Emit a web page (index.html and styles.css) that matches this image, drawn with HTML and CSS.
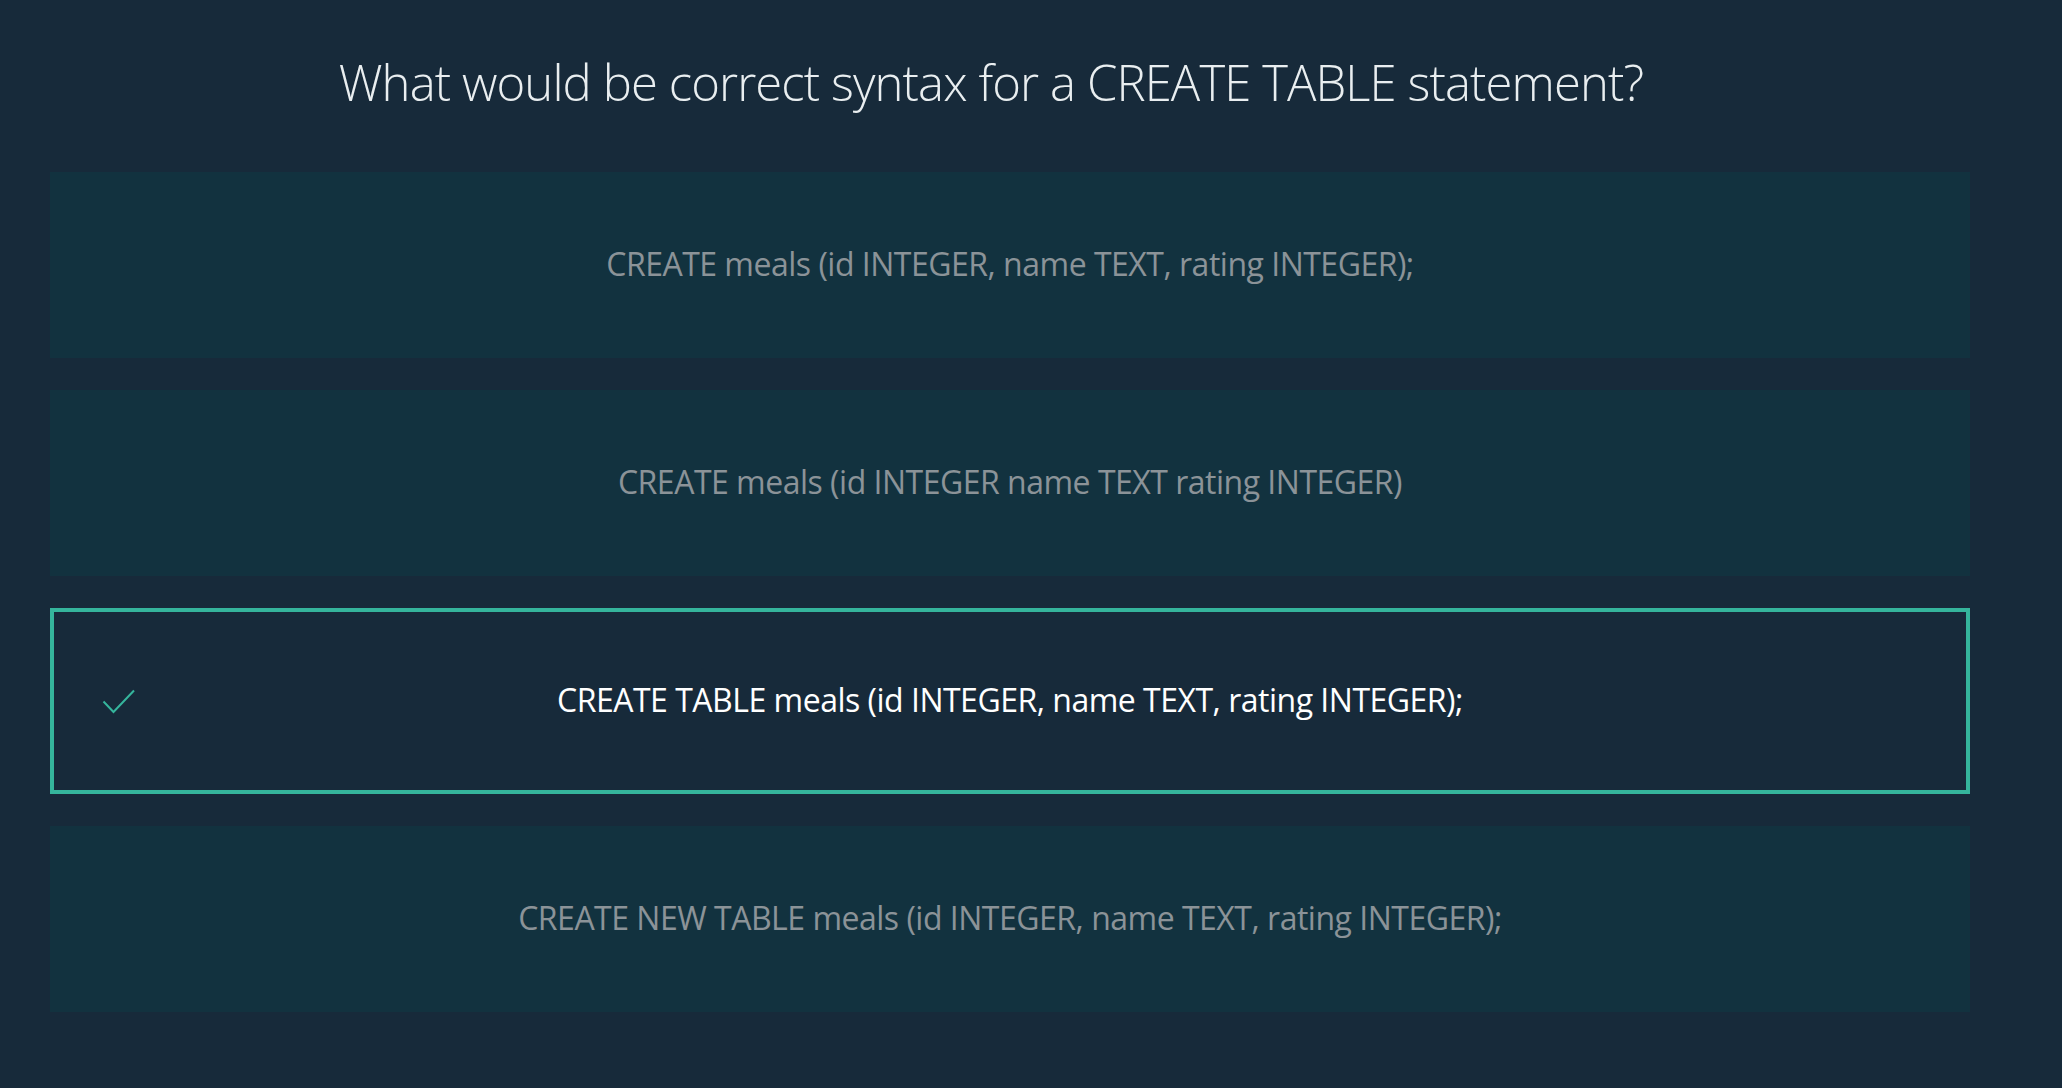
FILE: index.html
```html
<!DOCTYPE html>
<html>
<head>
<meta charset="utf-8">
<link rel="stylesheet" href="styles.css">
</head>
<body>
<div class="page">
  <h1 class="question">What would be correct syntax for a CREATE TABLE statement?</h1>
  <div class="options">
    <div class="option"><span class="label">CREATE meals (id INTEGER, name TEXT, rating INTEGER);</span></div>
    <div class="option"><span class="label">CREATE meals (id INTEGER name TEXT rating INTEGER)</span></div>
    <div class="option selected">
      <svg class="check" width="34" height="26" viewBox="0 0 34 26"><polyline points="1.5,12.5 11.5,23 32,1.5" fill="none" stroke="#35b59c" stroke-width="2"/></svg>
      <span class="label">CREATE TABLE meals (id INTEGER, name TEXT, rating INTEGER);</span>
    </div>
    <div class="option"><span class="label">CREATE NEW TABLE meals (id INTEGER, name TEXT, rating INTEGER);</span></div>
  </div>
</div>
</body>
</html>
```
FILE: styles.css
```css
html, body {
  margin: 0;
  padding: 0;
  background: #172a3a;
  height: 100%;
}
.page {
  padding: 0 92px 0 50px;
  font-family: "Open Sans", "Noto Sans", sans-serif;
}
.question {
  margin: 0;
  padding: 50px 38px 0 0;
  height: 172px;
  box-sizing: border-box;
  text-align: center;
  font-weight: 300;
  font-size: 49px;
  line-height: 64px;
  letter-spacing: -0.9px;
  color: #e9eef0;
}
.options {
  display: flex;
  flex-direction: column;
  gap: 32px;
}
.option {
  position: relative;
  height: 186px;
  box-sizing: border-box;
  background: #12323f;
  display: flex;
  align-items: center;
  justify-content: center;
}
.label {
  font-size: 32px;
  line-height: 44px;
  padding-bottom: 2px;
  color: #8b9398;
  letter-spacing: -0.5px;
}
.selected {
  background: #172a3a;
  border: 4px solid #35b59c;
}
.selected .label {
  color: #ffffff;
}
.check {
  position: absolute;
  left: 48px;
  top: 77px;
}
```
